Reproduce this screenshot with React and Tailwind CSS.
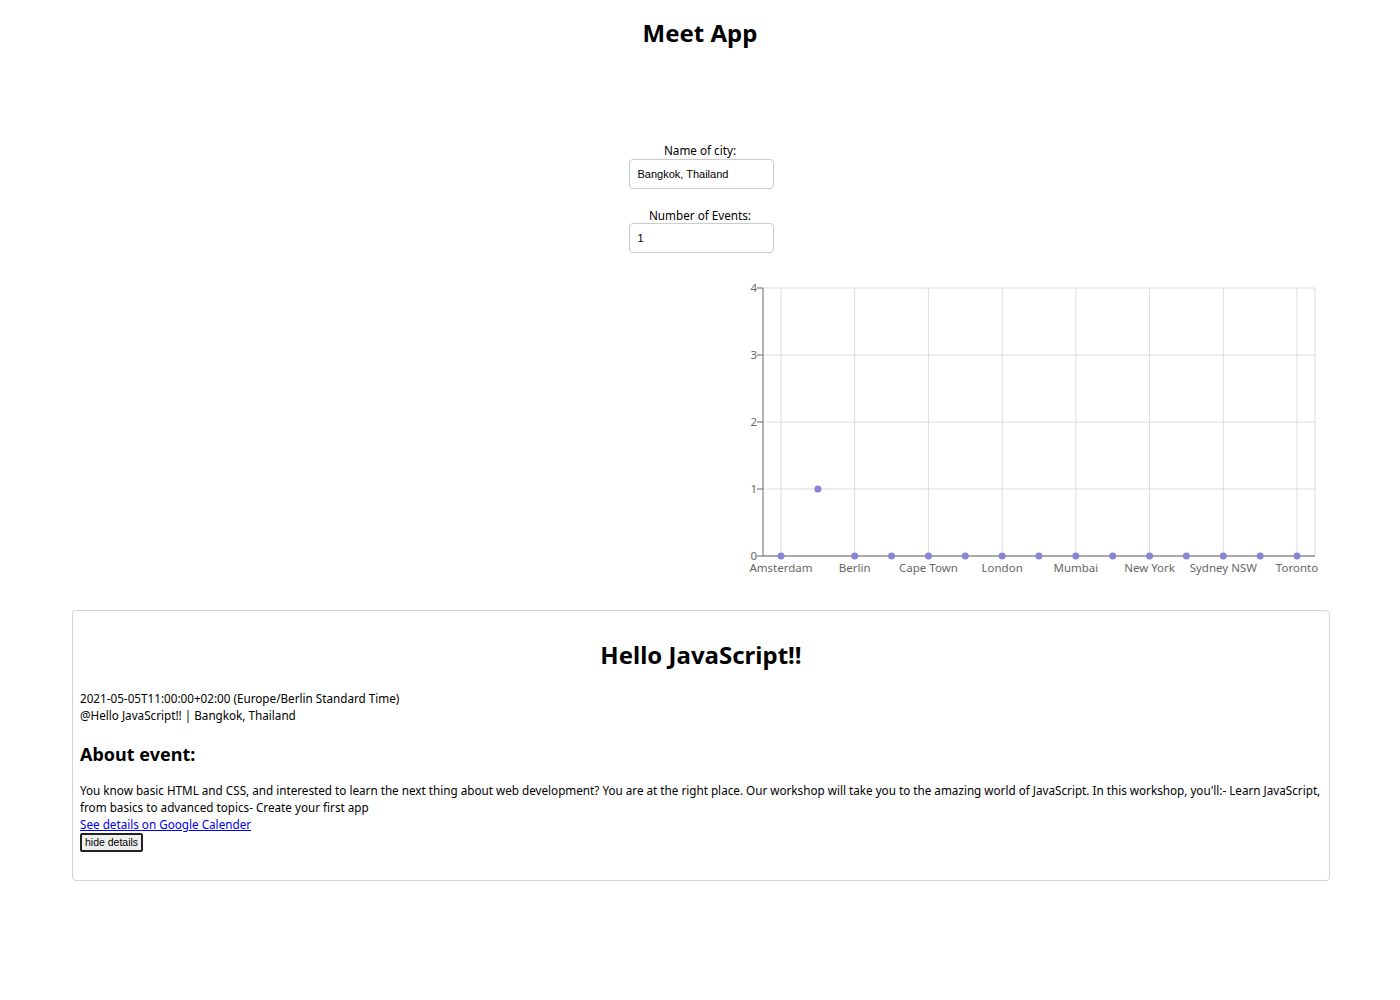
import React from 'react';

const cities = [
  'Amsterdam', '', 'Berlin', '', 'Cape Town', '', 'London', '',
  'Mumbai', '', 'New York', '', 'Sydney NSW', '', 'Toronto',
];
const counts = [0, 1, 0, 0, 0, 0, 0, 0, 0, 0, 0, 0, 0, 0, 0];

const EventsChart = () => {
  const left = 33;
  const right = 585;
  const top = 12;
  const bottom = 280;
  const step = 36.857;
  const xAt = (i) => 51 + i * step;
  const yAt = (v) => bottom - (v * (bottom - top)) / 4;

  return (
    <svg width="600" height="310" className="block" style={{ fontFamily: '"Noto Sans", sans-serif' }}>
      {/* grid */}
      {[0, 1, 2, 3, 4].map((v) => (
        <line key={'h' + v} x1={left} x2={right} y1={yAt(v)} y2={yAt(v)} stroke="#ddd" />
      ))}
      {cities.map((c, i) =>
        c ? <line key={'v' + i} x1={xAt(i)} x2={xAt(i)} y1={top} y2={bottom} stroke="#ddd" /> : null
      )}
      <line x1={right} x2={right} y1={top} y2={bottom} stroke="#ddd" />

      {/* axes */}
      <line x1={left} x2={left} y1={top} y2={bottom} stroke="#666" />
      <line x1={left} x2={right} y1={bottom} y2={bottom} stroke="#666" />
      {[0, 1, 2, 3, 4].map((v) => (
        <g key={'t' + v}>
          <line x1={left - 6} x2={left} y1={yAt(v)} y2={yAt(v)} stroke="#666" />
          <text x={left - 6} y={yAt(v) + 4} textAnchor="end" fontSize="11.5" fill="#666">
            {v}
          </text>
        </g>
      ))}
      {cities.map((c, i) =>
        c ? (
          <text key={'l' + i} x={xAt(i)} y={bottom + 16} textAnchor="middle" fontSize="11.5" fill="#666">
            {c}
          </text>
        ) : null
      )}

      {/* points */}
      {counts.map((n, i) => (
        <circle key={'p' + i} cx={xAt(i)} cy={yAt(n)} r="3.5" fill="#8884d8" />
      ))}
    </svg>
  );
};

const App = () => {
  return (
    <div className="min-h-screen bg-white text-black" style={{ fontFamily: '"Noto Sans", sans-serif' }}>
      <h1 className="pt-[15px] text-center text-[24px] font-bold leading-[36px]">Meet App</h1>

      <div className="mt-[91px] flex flex-col items-center">
        <label className="text-[11.7px] leading-[16px]">Name of city:</label>
        <input
          readOnly
          value="Bangkok, Thailand"
          className="ml-[2px] mt-[1px] h-[30px] w-[145px] rounded-[4px] border border-[#ccc] px-[8px] text-[11px] outline-none"
          style={{ fontFamily: '"Liberation Sans", Arial, sans-serif' }}
        />
        <label className="mt-[18px] text-[11.7px] leading-[16px]">Number of Events:</label>
        <input
          readOnly
          value="1"
          className="ml-[2px] h-[30px] w-[145px] rounded-[4px] border border-[#ccc] px-[8px] text-[11px] outline-none"
          style={{ fontFamily: '"Liberation Sans", Arial, sans-serif' }}
        />
      </div>

      <div className="mt-[23px] flex justify-end pr-[70px]">
        <EventsChart />
      </div>

      <div className="ml-[72px] mr-[70px] mt-[24px] rounded-[4px] border border-[#d4d4d4] px-[7px] pb-[28px]">
        <h2 className="pt-[26px] text-center text-[24px] font-bold leading-[36px]">Hello JavaScript!!</h2>
        <div className="mt-[17px] text-[11.7px] leading-[17px]">
          <p>2021-05-05T11:00:00+02:00 (Europe/Berlin Standard Time)</p>
          <p>@Hello JavaScript!! | Bangkok, Thailand</p>
        </div>
        <h3 className="mt-[17px] text-[18px] font-bold leading-[26px]">About event:</h3>
        <div className="mt-[15px] text-[11.7px] leading-[17px]">
          <p>
            You know basic HTML and CSS, and interested to learn the next thing about web development? You are at the
            right place. Our workshop will take you to the amazing world of JavaScript. In this workshop, you'll:- Learn
            JavaScript, from basics to advanced topics- Create your first app
          </p>
          <a href="#" className="text-[#0000ee] underline">
            See details on Google Calender
          </a>
        </div>
        <button
          className="block rounded-[2px] border-2 border-[#222] bg-[#efefef] px-[3px] py-[1px] text-[10.5px] leading-[13px]"
          style={{ fontFamily: '"Liberation Sans", Arial, sans-serif' }}
        >
          hide details
        </button>
      </div>
    </div>
  );
};

export default App;
